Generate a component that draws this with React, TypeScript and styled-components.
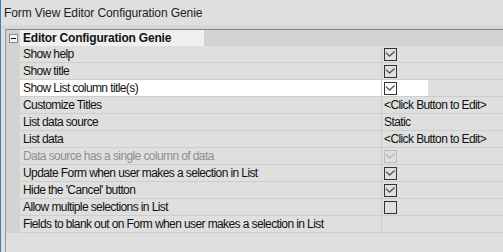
import React from 'react';
import styled, { createGlobalStyle } from 'styled-components';

const GlobalStyle = createGlobalStyle`
  html, body {
    margin: 0;
    padding: 0;
    background: #dfdfdf;
  }
`;

type Value =
  | { kind: 'check'; checked: boolean; disabled?: boolean }
  | { kind: 'text'; text: string }
  | { kind: 'none' };

type Prop = {
  label: string;
  value: Value;
  disabled?: boolean;
  selected?: boolean;
};

const rows: Prop[] = [
  { label: 'Show help', value: { kind: 'check', checked: true } },
  { label: 'Show title', value: { kind: 'check', checked: true } },
  { label: 'Show List column title(s)', value: { kind: 'check', checked: true }, selected: true },
  { label: 'Customize Titles', value: { kind: 'text', text: '<Click Button to Edit>' } },
  { label: 'List data source', value: { kind: 'text', text: 'Static' } },
  { label: 'List data', value: { kind: 'text', text: '<Click Button to Edit>' } },
  {
    label: 'Data source has a single column of data',
    value: { kind: 'check', checked: true, disabled: true },
    disabled: true,
  },
  { label: 'Update Form when user makes a selection in List', value: { kind: 'check', checked: true } },
  { label: "Hide the 'Cancel' button", value: { kind: 'check', checked: true } },
  { label: 'Allow multiple selections in List', value: { kind: 'check', checked: false } },
  { label: 'Fields to blank out on Form when user makes a selection in List', value: { kind: 'none' } },
];

const CheckBox = ({ checked, disabled }: { checked: boolean; disabled?: boolean }) => (
  <Box $disabled={disabled}>
    {checked && (
      <svg width="11" height="11" viewBox="0 0 11 11">
        <path
          d="M1 3.6 L4.6 7 L9.6 2.4"
          fill="none"
          stroke={disabled ? '#b4b4b4' : '#555'}
          strokeWidth="1.3"
        />
      </svg>
    )}
  </Box>
);

const App = () => {
  return (
    <>
      <GlobalStyle />
      <Window>
        <TitleBar>Form View Editor Configuration Genie</TitleBar>
        <Band />
        <GridFrame>
          <HeaderRow>
            <Gutter>
              <Collapse />
            </Gutter>
            <HeaderTitle>Editor Configuration Genie</HeaderTitle>
          </HeaderRow>
          {rows.map((r) => (
            <Row key={r.label}>
              <Gutter />
              <LabelCell $selected={r.selected} $disabled={r.disabled}>
                {r.label}
              </LabelCell>
              <ValueCell $selected={r.selected}>
                {r.value.kind === 'check' && (
                  <CheckBox checked={r.value.checked} disabled={r.value.disabled} />
                )}
                {r.value.kind === 'text' && r.value.text}
              </ValueCell>
            </Row>
          ))}
        </GridFrame>
      </Window>
    </>
  );
};

export default App;

const Window = styled.div`
  width: 503px;
  height: 252px;
  box-sizing: border-box;
  border-left: 1px solid #3f7db9;
  background: #dfdfdf;
  display: flex;
  flex-direction: column;
  font-family: 'Liberation Sans', Arial, sans-serif;
  color: #111;
  overflow: hidden;
`;

const TitleBar = styled.div`
  height: 25px;
  padding-left: 3px;
  display: flex;
  align-items: center;
  font-size: 12px;
  letter-spacing: -0.1px;
  color: #222;
`;

const Band = styled.div`
  height: 4px;
  background: #d6d6d6;
`;

const GridFrame = styled.div`
  flex: 1;
  margin-left: 4px;
  border-top: 1px solid #848484;
  border-left: 1px solid #9a9a9a;
`;

const HeaderRow = styled.div`
  display: grid;
  grid-template-columns: 14px 184px 1fr;
  height: 16px;
  background: #d2d2d2;
`;

const Gutter = styled.div`
  background: #d3d3d3;
  display: flex;
  align-items: center;
  justify-content: center;
`;

const Collapse = styled.div`
  width: 9px;
  height: 9px;
  box-sizing: border-box;
  border: 1px solid #8a8a8a;
  background: #f4f4f4;
  position: relative;
  &::after {
    content: '';
    position: absolute;
    left: 1px;
    right: 1px;
    top: 3px;
    height: 1px;
    background: #111;
  }
`;

const HeaderTitle = styled.div`
  background: #f0f0f0;
  padding-left: 3px;
  font-size: 12px;
  letter-spacing: -0.2px;
  font-weight: bold;
  line-height: 16px;
  white-space: nowrap;
`;

const Row = styled.div`
  display: grid;
  grid-template-columns: 14px 362px 1fr;
  height: 17px;
`;

const LabelCell = styled.div<{ $selected?: boolean; $disabled?: boolean }>`
  box-sizing: border-box;
  border-bottom: 1px solid #cdcdcd;
  border-right: 1px solid #cdcdcd;
  background: ${(p) => (p.$selected ? '#ffffff' : '#dfdfdf')};
  color: ${(p) => (p.$disabled ? '#8f8f8f' : '#111')};
  padding-left: 3px;
  font-size: 12px;
  letter-spacing: -0.6px;
  line-height: 16px;
  white-space: nowrap;
`;

const ValueCell = styled.div<{ $selected?: boolean }>`
  box-sizing: border-box;
  border-bottom: 1px solid #cdcdcd;
  background: ${(p) =>
    p.$selected ? 'linear-gradient(to right, #fff 46px, #dfdfdf 46px)' : '#dfdfdf'};
  padding-left: 2px;
  font-size: 12px;
  letter-spacing: -0.6px;
  line-height: 16px;
  white-space: nowrap;
  display: flex;
  align-items: center;
`;

const Box = styled.div<{ $disabled?: boolean }>`
  width: 13px;
  height: 13px;
  box-sizing: border-box;
  border: 1px solid ${(p) => (p.$disabled ? '#bcbcbc' : '#333')};
  display: flex;
`;
